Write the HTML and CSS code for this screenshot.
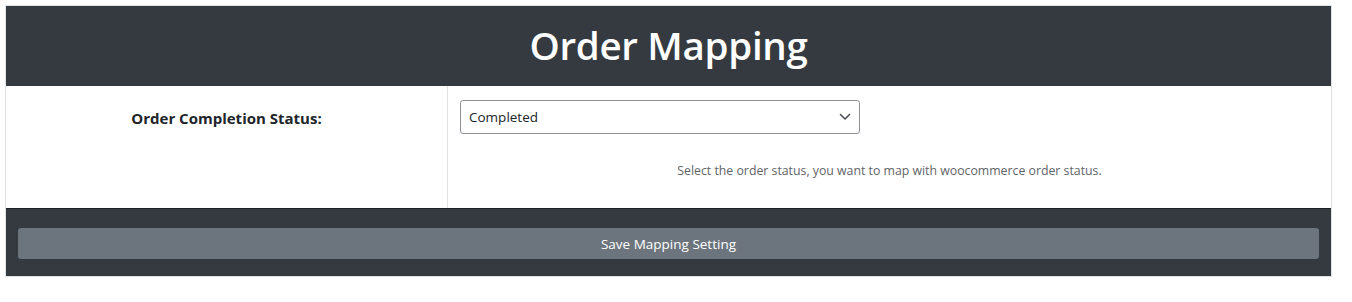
FILE: index.html
```
<!DOCTYPE html>
<html lang="en">
<head>
    <meta charset="UTF-8">
    <meta name="viewport" content="width=device-width, initial-scale=1.0">
    <title>Order Mapping</title>
    <link rel="stylesheet" href="styles.css">
</head>
<body>
    <div class="wrap">
        <div class="mapping">
            <div class="mapping-head">
                <h1>Order Mapping</h1>
            </div>
            <div class="mapping-row">
                <div class="cell-label">
                    <label for="orderStatus">Order Completion Status:</label>
                </div>
                <div class="cell-field">
                    <div class="select-box">
                        <span>Completed</span>
                        <svg width="12" height="8" viewBox="0 0 12 8">
                            <path d="M1.5 1.5 L6 6 L10.5 1.5" fill="none" stroke="#4a4f55" stroke-width="1.6" stroke-linecap="round" stroke-linejoin="round"/>
                        </svg>
                    </div>
                    <p class="help">Select the order status, you want to map with woocommerce order status.</p>
                </div>
            </div>
            <div class="mapping-foot">
                <button type="button">Save Mapping Setting</button>
            </div>
        </div>
    </div>
</body>
</html>
```

FILE: styles.css
```
body {
    margin: 0;
    font-family: "Open Sans", "Noto Sans", sans-serif;
    background-color: #fff;
    color: #212529;
}
.wrap {
    padding: 5px 20px 0 5px;
}
.mapping {
    border: 1px solid #dee2e6;
}
.mapping-head {
    background-color: #343a40;
    height: 80px;
    display: flex;
    align-items: center;
    justify-content: center;
}
.mapping-head h1 {
    margin: 0 0 3px 0;
    color: #fff;
    font-size: 38.5px;
    font-weight: 600;
    letter-spacing: -0.3px;
}
.mapping-row {
    display: grid;
    grid-template-columns: 442px 1fr;
    height: 122px;
    border-bottom: 1px solid #1d2024;
}
.cell-label {
    border-right: 1px solid #dee2e6;
    text-align: center;
    padding-top: 21px;
}
.cell-label label {
    font-weight: 700;
    font-size: 15px;
}
.cell-field {
    padding: 14px 12px 0 12px;
}
.select-box {
    width: 400px;
    height: 34px;
    box-sizing: border-box;
    border: 1px solid #8b8f94;
    border-radius: 3px;
    display: flex;
    align-items: center;
    justify-content: space-between;
    padding: 0 8px;
    font-size: 13.5px;
    color: #212529;
}
.help {
    margin: 28px 0 0 0;
    text-align: center;
    font-size: 12.3px;
    color: #5f6368;
}
.mapping-foot {
    background-color: #343a40;
    padding: 19px 12px 17px 12px;
}
button {
    display: block;
    width: 100%;
    height: 31px;
    border: none;
    border-radius: 3px;
    background-color: #6c757d;
    color: #fff;
    font-family: "Open Sans", "Noto Sans", sans-serif;
    font-size: 13.5px;
    cursor: pointer;
}
```
